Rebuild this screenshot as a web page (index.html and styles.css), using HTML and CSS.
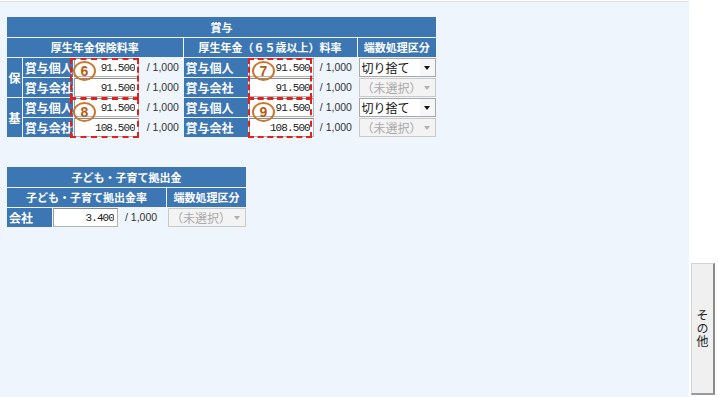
FILE: index.html
```html
<!DOCTYPE html>
<html lang="ja">
<head>
  <meta charset="UTF-8">
  <title>保険料率 - 賞与</title>
  <meta name="viewport" content="width=device-width, initial-scale=1.0">
  <link rel="stylesheet" href="styles.css">
</head>
<body>
  <div class="page">
    <main class="panel">
      <div class="bonus">
        <table class="grid">
          <colgroup>
            <col class="w-side"><col class="w-label"><col class="w-num"><col class="w-per">
            <col class="w-label2"><col class="w-num2"><col class="w-per2"><col class="w-pick">
          </colgroup>
          <tr><th colspan="8" class="title">賞与</th></tr>
          <tr class="head">
            <th colspan="4">厚生年金保険料率</th>
            <th colspan="3">厚生年金（６５歳以上）料率</th>
            <th>端数処理区分</th>
          </tr>
          <tr>
            <th rowspan="2" class="side">保</th>
            <th class="label">賞与個人</th>
            <td><input class="rate" type="text" value="91.500" readonly></td>
            <td class="per">/ 1,000</td>
            <th class="label">賞与個人</th>
            <td><input class="rate" type="text" value="91.500" readonly></td>
            <td class="per">/ 1,000</td>
            <td class="pick"><div class="sel">切り捨て<span class="arrow"></span></div></td>
          </tr>
          <tr>
            <th class="label">賞与会社</th>
            <td><input class="rate" type="text" value="91.500" readonly></td>
            <td class="per">/ 1,000</td>
            <th class="label">賞与会社</th>
            <td><input class="rate" type="text" value="91.500" readonly></td>
            <td class="per">/ 1,000</td>
            <td class="pick"><div class="sel off">（未選択）<span class="arrow"></span></div></td>
          </tr>
          <tr>
            <th rowspan="2" class="side">基</th>
            <th class="label">賞与個人</th>
            <td><input class="rate" type="text" value="91.500" readonly></td>
            <td class="per">/ 1,000</td>
            <th class="label">賞与個人</th>
            <td><input class="rate" type="text" value="91.500" readonly></td>
            <td class="per">/ 1,000</td>
            <td class="pick"><div class="sel">切り捨て<span class="arrow"></span></div></td>
          </tr>
          <tr>
            <th class="label">賞与会社</th>
            <td><input class="rate" type="text" value="108.500" readonly></td>
            <td class="per">/ 1,000</td>
            <th class="label">賞与会社</th>
            <td><input class="rate" type="text" value="108.500" readonly></td>
            <td class="per">/ 1,000</td>
            <td class="pick"><div class="sel off">（未選択）<span class="arrow"></span></div></td>
          </tr>
        </table>

        <!-- annotation marks -->
        <div class="mark m1"></div>
        <div class="mark m2"></div>
        <div class="mark m3"></div>
        <div class="mark m4"></div>
        <span class="badge b6">6</span>
        <span class="badge b7">7</span>
        <span class="badge b8">8</span>
        <span class="badge b9">9</span>
      </div>

      <div class="kids">
        <table class="grid">
          <colgroup>
            <col class="k-label"><col class="k-num"><col class="k-per"><col class="k-pick">
          </colgroup>
          <tr><th colspan="4" class="title">子ども・子育て拠出金</th></tr>
          <tr class="head">
            <th colspan="3">子ども・子育て拠出金率</th>
            <th>端数処理区分</th>
          </tr>
          <tr>
            <th class="label">会社</th>
            <td><input class="rate" type="text" value="3.400" readonly></td>
            <td class="per">/ 1,000</td>
            <td class="pick"><div class="sel off">（未選択）<span class="arrow"></span></div></td>
          </tr>
        </table>
      </div>
    </main>

    <aside class="tabs">
      <div class="tab">その他</div>
    </aside>
  </div>
</body>
</html>
```

FILE: styles.css
```css
body {
  margin: 0;
  font-family: 'Noto Sans CJK JP', sans-serif;
  background: #fff;
}
.page {
  display: flex;
  height: 397px;
  padding-top: 1px;
  box-sizing: border-box;
}
.panel {
  width: 689px;
  background: #eef5fc;
  border-top: 1px solid #dde2e8;
  padding: 14px 0 0 6px;
  box-sizing: border-box;
}
.bonus {
  position: relative;
  width: 431px;
}
.kids {
  margin-top: 28px;
}
.grid {
  border-collapse: separate;
  border-spacing: 1px;
  table-layout: fixed;
}
.grid th, .grid td {
  padding: 0;
  height: 19px;
  font-size: 11px;
  line-height: 19px;
  white-space: nowrap;
}
.grid th {
  background: #3d77b3;
  color: #fff;
  font-weight: bold;
}
.grid th.title {
  height: 20px;
}
.grid th.label {
  text-align: left;
  padding-left: 2px;
  font-size: 12px;
}
.grid th.side {
  font-size: 12px;
}
.w-side { width: 15px; }
.w-label { width: 48px; }
.w-num { width: 67px; }
.w-per { width: 41px; }
.w-label2 { width: 65px; }
.w-num2 { width: 65px; }
.w-per2 { width: 42px; }
.w-pick { width: 79px; }
.k-label { width: 45px; }
.k-num { width: 66px; }
.k-per { width: 46px; }
.k-pick { width: 79px; }

.rate {
  display: block;
  width: 65px;
  height: 19px;
  box-sizing: border-box;
  margin: 0;
  padding: 0 3px 0 0;
  border: 1px solid #b4b4b4;
  border-top-color: #8c8c8c;
  border-left-color: #9a9a9a;
  background: #fff;
  text-align: right;
  font-family: 'Liberation Mono', monospace;
  font-size: 11px;
  letter-spacing: -0.9px;
  color: #222;
  outline: none;
}
.per {
  padding-left: 5px !important;
  font-family: 'Liberation Sans', sans-serif;
  font-size: 10.5px !important;
  color: #333;
}
.pick {
  padding-left: 1px !important;
}
.sel {
  position: relative;
  height: 19px;
  box-sizing: border-box;
  border: 1px solid #a9a9a9;
  background: #fff;
  padding-left: 2px;
  font-size: 12px;
  line-height: 17px;
  color: #111;
}
.sel .arrow {
  position: absolute;
  right: 0;
  top: 0;
  width: 15px;
  height: 17px;
  background: #f6f6f6;
}
.sel .arrow::after {
  content: '';
  position: absolute;
  left: 4px;
  top: 7px;
  border-left: 3.5px solid transparent;
  border-right: 3.5px solid transparent;
  border-top: 4px solid #111;
}
.sel.off {
  background: #f3f3f3;
  border-color: #cacaca;
  color: #a9a9a9;
}
.sel.off .arrow {
  background: #f3f3f3;
}
.sel.off .arrow::after {
  border-top-color: #b0b0b0;
}

.mark {
  position: absolute;
  border: 2px dashed #e3201b;
  box-sizing: border-box;
  pointer-events: none;
}
.m1 { left: 64px; top: 42px; width: 69px; height: 41px; }
.m2 { left: 64px; top: 82px; width: 69px; height: 40px; }
.m3 { left: 242px; top: 42px; width: 64px; height: 41px; }
.m4 { left: 242px; top: 82px; width: 64px; height: 40px; }

.badge {
  position: absolute;
  width: 23px;
  height: 20px;
  box-sizing: border-box;
  border: 2px solid #c9782f;
  border-radius: 50%;
  color: #b75c12;
  font-family: 'Liberation Sans', sans-serif;
  font-weight: bold;
  font-size: 14px;
  line-height: 16px;
  text-align: center;
}
.b6 { left: 67px; top: 45px; }
.b7 { left: 246px; top: 45px; }
.b8 { left: 67px; top: 86px; }
.b9 { left: 246px; top: 86px; }

.tabs {
  flex: 1;
  display: flex;
  flex-direction: column;
  justify-content: flex-end;
  padding: 0 0 2px 2px;
}
.tab {
  width: 24px;
  height: 132px;
  box-sizing: border-box;
  background: #f0f0f0;
  border: 1px solid #d4d4d4;
  border-right: 2px solid #8a8a8a;
  border-bottom: 2px solid #9a9a9a;
  display: flex;
  align-items: center;
  justify-content: center;
  writing-mode: vertical-rl;
  text-orientation: upright;
  font-size: 12px;
  letter-spacing: 1px;
  color: #222;
}
```
